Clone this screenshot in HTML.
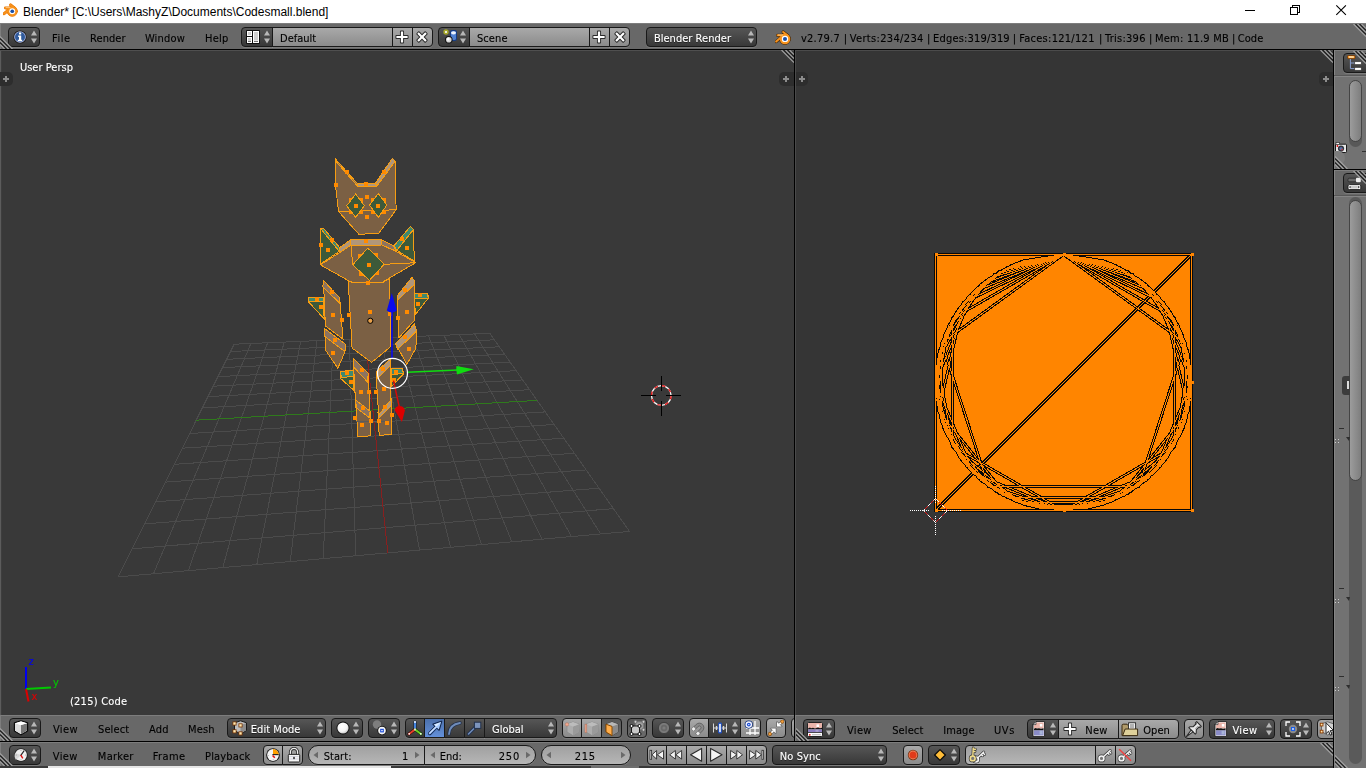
<!DOCTYPE html>
<html><head><meta charset="utf-8"><title>Blender</title><style>
html,body{margin:0;padding:0;background:#393939}
#r{position:relative;width:1366px;height:768px;overflow:hidden;font-family:'DejaVu Sans Condensed','DejaVu Sans','Liberation Sans',sans-serif;font-size:11px}
#r *{box-sizing:border-box}
.a{position:absolute;display:block}
#tx{position:absolute;left:0;top:0;width:1366px;height:768px;will-change:transform}
.w{position:absolute;border:1px solid #191919;box-shadow:0 1px 0 rgba(255,255,255,0.13)}
.t{position:absolute;white-space:pre;line-height:14px;font-size:11px;font-family:'DejaVu Sans Condensed','DejaVu Sans','Liberation Sans',sans-serif;-webkit-text-stroke:0.12px}
.s{text-shadow:0 1px 0 rgba(0,0,0,0.45)}
.title{position:absolute;white-space:pre;font-family:'Liberation Sans',sans-serif;font-size:12px;line-height:16px;color:#000}
</style></head><body><div id="r">
<div style="position:absolute;left:0;top:0;width:1366px;height:23px;background:#fff"></div>
<svg class="a" style="left:3px;top:3.3px" width="14.8" height="14.8" viewBox="0 0 16 16"><g fill="none" stroke-linecap="round"><path d="M8.2 2 L12.6 5.6 M2.6 5.3 H9.4 M1.2 11.6 L5.8 7.6" stroke="#ea7600" stroke-width="3.2"/><circle cx="10" cy="8.9" r="5.5" fill="#ea7600" stroke="#ea7600" stroke-width="1"/><path d="M8.2 2 L12.6 5.6 M2.6 5.3 H9.4 M1.2 11.6 L5.8 7.6" stroke="#f7931e" stroke-width="2"/></g><circle cx="10" cy="8.9" r="5.3" fill="#f7931e"/><path d="M3 5 H8" stroke="#ffd9a0" stroke-width="0.8"/><circle cx="10" cy="8.9" r="3.2" fill="#fff"/><circle cx="10" cy="8.9" r="2" fill="#1a4fa8"/></svg>
<span class="title" style="left:23px;top:4px">Blender* [C:\Users\MashyZ\Documents\Codesmall.blend]</span>
<svg class="a" style="left:1240px;top:0" width="126" height="23"><g stroke="#000" stroke-width="1" fill="none" shape-rendering="crispEdges"><path d="M5 10.5 H15"/><path d="M50.5 7.5 H57.5 V14.5 H50.5Z M52.5 7.5 V5.5 H59.5 V12.5 H57.5"/></g><path d="M96.3 5.3 L105.9 14.9 M105.9 5.3 L96.3 14.9" stroke="#000" stroke-width="1.1" fill="none"/></svg>
<div style="position:absolute;left:0;top:23px;width:1366px;height:26px;background:#686868"></div>
<div style="position:absolute;left:0;top:49px;width:1366px;height:1px;background:#000"></div>
<div style="position:absolute;left:0;top:50px;width:794px;height:665px;background:#393939"></div>
<div style="position:absolute;left:0;top:50px;width:1px;height:665px;background:#5c5c5c"></div>
<div style="position:absolute;left:794px;top:50px;width:1px;height:692px;background:#000"></div>
<div style="position:absolute;left:795px;top:50px;width:538px;height:665px;background:#353535"></div>
<div style="position:absolute;left:795px;top:50px;width:1px;height:665px;background:#4a4a4a"></div>
<div style="position:absolute;left:0;top:50px;width:794px;height:1px;background:#4f4f4f"></div>
<div style="position:absolute;left:795px;top:50px;width:538px;height:1px;background:#4b4b4b"></div>
<div style="position:absolute;left:1px;top:51px;width:1px;height:664px;background:#3e3e3e"></div>
<div style="position:absolute;left:1333px;top:50px;width:1px;height:718px;background:#000"></div>
<div style="position:absolute;left:1334px;top:50px;width:32px;height:718px;background:#727272"></div>
<div style="position:absolute;left:1334px;top:50px;width:32px;height:25px;background:#686868"></div>
<div style="position:absolute;left:1334px;top:170px;width:32px;height:25px;background:#686868"></div>
<div style="position:absolute;left:1334px;top:50px;width:32px;height:1px;background:#7d7d7d"></div>
<div style="position:absolute;left:1334px;top:170px;width:32px;height:1px;background:#7d7d7d"></div>
<div style="position:absolute;left:1334px;top:76px;width:32px;height:1px;background:#858585"></div>
<div style="position:absolute;left:1334px;top:196px;width:32px;height:1px;background:#858585"></div>
<div style="position:absolute;left:0;top:715px;width:794px;height:26px;background:#686868"></div>
<div style="position:absolute;left:795px;top:715px;width:538px;height:26px;background:#686868"></div>
<div style="position:absolute;left:0;top:741px;width:1333px;height:1px;background:#000"></div>
<div style="position:absolute;left:0;top:742px;width:1333px;height:24px;background:#686868"></div>
<div style="position:absolute;left:0;top:766px;width:1333px;height:2px;background:#3a3a3a"></div>
<div style="position:absolute;left:48px;top:766px;width:343px;height:2px;background:#e6e6e6"></div>
<div style="position:absolute;left:591px;top:766px;width:48px;height:2px;background:#6e6e6e"></div>
<div style="position:absolute;left:0px;top:23px;width:1366px;height:1px;background:#7d7d7d"></div>
<div style="position:absolute;left:0px;top:715px;width:794px;height:1px;background:#7d7d7d"></div>
<div style="position:absolute;left:795px;top:715px;width:538px;height:1px;background:#7d7d7d"></div>
<div style="position:absolute;left:0px;top:742px;width:1333px;height:1px;background:#7d7d7d"></div>
<div style="position:absolute;left:0;top:23px;width:1px;height:26px;background:#7d7d7d"></div>
<div style="position:absolute;left:0;top:715px;width:1px;height:26px;background:#7d7d7d"></div>
<div style="position:absolute;left:795px;top:715px;width:1px;height:26px;background:#7d7d7d"></div>
<div style="position:absolute;left:0;top:742px;width:1px;height:24px;background:#7d7d7d"></div>
<div style="position:absolute;left:1334px;top:50px;width:1px;height:718px;background:#858585"></div>
<svg class="a" style="left:0;top:0" width="1366" height="768" viewBox="0 0 1366 768">
<g stroke-width="1" fill="none" shape-rendering="crispEdges"><line x1="234.1" y1="344.2" x2="489.8" y2="333.3" stroke="#4b4b4b"/>
<line x1="230.5" y1="351.5" x2="494.4" y2="339.8" stroke="#4b4b4b"/>
<line x1="226.6" y1="359.3" x2="499.3" y2="346.8" stroke="#4b4b4b"/>
<line x1="222.4" y1="367.6" x2="504.6" y2="354.2" stroke="#4b4b4b"/>
<line x1="218.0" y1="376.6" x2="510.2" y2="362.2" stroke="#4b4b4b"/>
<line x1="213.2" y1="386.2" x2="516.2" y2="370.7" stroke="#4b4b4b"/>
<line x1="208.0" y1="396.6" x2="522.6" y2="379.9" stroke="#4b4b4b"/>
<line x1="202.3" y1="407.9" x2="529.6" y2="389.7" stroke="#4b4b4b"/>
<line x1="189.6" y1="433.5" x2="545.3" y2="411.9" stroke="#4b4b4b"/>
<line x1="182.3" y1="448.2" x2="554.1" y2="424.5" stroke="#4b4b4b"/>
<line x1="174.2" y1="464.3" x2="563.8" y2="438.2" stroke="#4b4b4b"/>
<line x1="165.4" y1="482.1" x2="574.4" y2="453.3" stroke="#4b4b4b"/>
<line x1="155.5" y1="501.8" x2="586.1" y2="469.9" stroke="#4b4b4b"/>
<line x1="144.5" y1="523.9" x2="599.0" y2="488.2" stroke="#4b4b4b"/>
<line x1="132.1" y1="548.8" x2="613.4" y2="508.6" stroke="#4b4b4b"/>
<line x1="118.1" y1="576.9" x2="629.5" y2="531.4" stroke="#4b4b4b"/>
<line x1="234.1" y1="344.2" x2="118.1" y2="576.9" stroke="#4b4b4b"/>
<line x1="250.9" y1="343.5" x2="153.5" y2="573.7" stroke="#4b4b4b"/>
<line x1="267.6" y1="342.8" x2="188.4" y2="570.6" stroke="#4b4b4b"/>
<line x1="284.2" y1="342.1" x2="222.8" y2="567.6" stroke="#4b4b4b"/>
<line x1="300.7" y1="341.4" x2="256.8" y2="564.6" stroke="#4b4b4b"/>
<line x1="317.0" y1="340.7" x2="290.2" y2="561.6" stroke="#4b4b4b"/>
<line x1="333.3" y1="340.0" x2="323.2" y2="558.7" stroke="#4b4b4b"/>
<line x1="349.4" y1="339.3" x2="355.7" y2="555.8" stroke="#4b4b4b"/>
<line x1="381.4" y1="337.9" x2="419.5" y2="550.1" stroke="#4b4b4b"/>
<line x1="397.2" y1="337.2" x2="450.7" y2="547.3" stroke="#4b4b4b"/>
<line x1="412.9" y1="336.6" x2="481.5" y2="544.6" stroke="#4b4b4b"/>
<line x1="428.5" y1="335.9" x2="511.9" y2="541.9" stroke="#4b4b4b"/>
<line x1="444.0" y1="335.3" x2="541.9" y2="539.2" stroke="#4b4b4b"/>
<line x1="459.3" y1="334.6" x2="571.5" y2="536.6" stroke="#4b4b4b"/>
<line x1="474.6" y1="333.9" x2="600.7" y2="534.0" stroke="#4b4b4b"/>
<line x1="489.8" y1="333.3" x2="629.5" y2="531.4" stroke="#4b4b4b"/>
<line x1="196.2" y1="420.2" x2="537.1" y2="400.4" stroke="#2f7a1c"/>
<line x1="365.4" y1="338.6" x2="387.8" y2="552.9" stroke="#8a1f1f"/></g>
<g shape-rendering="crispEdges"><polygon points="308.5,298.0 323.4,297.3 324.1,318.8 308.5,301.9" fill="#3d5a3a" stroke="#f79d12" stroke-width="1"/>
<polygon points="308.5,298.0 323.4,297.3 323.4,301.9 309.0,301.9" fill="#3f8a70" stroke="#f79d12" stroke-width="1"/>
<polygon points="414.6,293.4 427.0,293.4 428.9,297.3 415.2,314.9" fill="#3d5a3a" stroke="#f79d12" stroke-width="1"/>
<polygon points="414.6,293.4 427.0,293.4 428.3,298.0 414.6,298.0" fill="#3f8a70" stroke="#f79d12" stroke-width="1"/>
<polygon points="340.2,371.5 353.2,370.2 353.9,390.4 340.8,378.6" fill="#3d5a3a" stroke="#f79d12" stroke-width="1"/>
<polygon points="340.2,371.5 353.2,370.2 353.2,376.0 341.5,378.0" fill="#3f8a70" stroke="#f79d12" stroke-width="1"/>
<polygon points="391.0,368.2 402.7,368.2 403.3,374.1 391.6,386.5" fill="#3d5a3a" stroke="#f79d12" stroke-width="1"/>
<polygon points="391.0,368.2 402.7,368.2 403.1,373.4 391.6,374.7" fill="#3f8a70" stroke="#f79d12" stroke-width="1"/>
<polygon points="353.2,358.5 368.2,373.4 370.1,417.7 355.8,407.3" fill="#7b6044" stroke="#f79d12" stroke-width="1"/>
<polygon points="353.2,358.5 368.2,373.4 367.5,381.9 353.6,367.0" fill="#8c7360" stroke="#f79d12" stroke-width="1"/>
<polygon points="355.8,400.1 370.1,411.2 370.1,435.9 357.8,436.6" fill="#7b6044" stroke="#f79d12" stroke-width="1"/>
<polygon points="355.8,400.1 370.1,411.2 369.5,417.7 356.2,407.9" fill="#8c7360" stroke="#f79d12" stroke-width="1"/>
<polygon points="391.0,400.1 391.6,434.6 379.2,435.3 378.0,415.1" fill="#7b6044" stroke="#f79d12" stroke-width="1"/>
<polygon points="391.0,398.8 391.0,406.0 379.2,417.7 378.0,412.5" fill="#b0967a" stroke="#f79d12" stroke-width="1"/>
<polygon points="390.3,359.1 391.0,399.5 378.6,415.1 376.0,372.1" fill="#7b6044" stroke="#f79d12" stroke-width="1"/>
<polygon points="390.3,359.1 390.3,365.6 377.9,378.0 376.6,372.1" fill="#b0967a" stroke="#f79d12" stroke-width="1"/>
<line x1="355.8" y1="421.8" x2="387.7" y2="421.4" stroke="#5a5a5a"/>
<polygon points="348.2,281.1 353.4,283.0 382.7,282.4 389.8,278.5 390.5,346.8 371.6,362.4 352.1,348.1" fill="#7b6044" stroke="#f79d12" stroke-width="1"/>
<polygon points="323.4,280.4 339.7,298.0 343.0,339.0 325.4,326.0" fill="#7b6044" stroke="#f79d12" stroke-width="1"/>
<polygon points="323.4,280.4 339.7,298.0 339.7,303.2 322.8,286.9" fill="#8c7360" stroke="#f79d12" stroke-width="1"/>
<polygon points="324.7,328.6 345.6,344.2 344.9,352.0 337.8,368.3 326.0,350.7" fill="#7b6044" stroke="#f79d12" stroke-width="1"/>
<polygon points="324.7,328.6 345.6,344.2 344.9,351.4 324.7,336.4" fill="#8c7360" stroke="#f79d12" stroke-width="1"/>
<polygon points="412.0,277.2 414.6,281.1 414.6,320.1 399.0,337.7 397.0,297.3" fill="#7b6044" stroke="#f79d12" stroke-width="1"/>
<polygon points="412.0,277.2 414.6,281.1 414.6,284.3 397.7,300.0 397.0,296.0" fill="#b0967a" stroke="#f79d12" stroke-width="1"/>
<polygon points="414.6,324.0 416.5,331.2 415.9,348.1 406.8,364.4 395.7,343.6" fill="#7b6044" stroke="#f79d12" stroke-width="1"/>
<polygon points="414.6,324.0 416.5,331.2 397.7,349.4 395.7,343.6" fill="#b0967a" stroke="#f79d12" stroke-width="1"/>
<polygon points="320.9,228.9 320.9,263.8 339.2,251.3" fill="#3d5a3a" stroke="#f79d12" stroke-width="1"/>
<polygon points="320.9,228.9 323.5,228.3 339.7,247.6 339.2,251.3" fill="#3f8a70" stroke="#f79d12" stroke-width="1"/>
<polygon points="410.5,226.3 413.6,229.4 414.2,261.1 396.5,250.2" fill="#3d5a3a" stroke="#f79d12" stroke-width="1"/>
<polygon points="410.5,226.3 413.6,229.4 397.0,250.2 393.9,246.0" fill="#3f8a70" stroke="#f79d12" stroke-width="1"/>
<polygon points="320.4,264.8 340.2,252.3 350.1,245.5 381.9,245.0 395.9,251.3 415.7,262.7 389.7,277.8 382.9,282.0 352.7,282.5 348.0,280.4" fill="#7b6044" stroke="#f79d12" stroke-width="1"/>
<polygon points="350.1,239.3 381.9,239.3 381.9,245.0 350.1,245.5" fill="#b0967a" stroke="#f79d12" stroke-width="1"/>
<polygon points="339.7,247.6 350.1,240.3 350.1,245.5 340.2,252.3" fill="#b0967a" stroke="#f79d12" stroke-width="1"/>
<polygon points="381.9,239.8 393.3,245.5 396.5,251.3 381.9,245.0" fill="#8c7360" stroke="#f79d12" stroke-width="1"/>
<polyline points="351.1,245.5 352.7,264.8" fill="none" stroke="#f79d12"/>
<polyline points="384.2,264.3 415.7,262.7" fill="none" stroke="#f79d12"/>
<rect x="358.0" y="254.0" width="4" height="4" fill="#ff8a00"/><rect x="374.3" y="252.8" width="4" height="4" fill="#ff8a00"/><rect x="358.5" y="271.5" width="4" height="4" fill="#ff8a00"/><rect x="375.3" y="270.5" width="4" height="4" fill="#ff8a00"/>
<polygon points="367.8,248.1 384.2,264.3 369.4,280.4 352.7,264.8" fill="#3d5a3a" stroke="#f79d12" stroke-width="1"/>
<polygon points="335.3,158.8 357.2,183.4 375.4,183.4 392.4,158.2 395.3,161.1 396.1,209.8 378.9,233.2 359.0,234.4 338.5,211.5 335.5,185.2" fill="#7b6044" stroke="#f79d12" stroke-width="1"/>
<polygon points="357.2,183.4 375.4,183.4 376.6,186.3 357.2,186.3" fill="#b0967a" stroke="#f79d12" stroke-width="1"/>
<polygon points="392.4,158.2 395.3,161.1 377.2,185.7 375.4,183.4" fill="#b0967a" stroke="#f79d12" stroke-width="1"/>
<polygon points="335.3,158.8 357.2,183.4 356.5,185.0 336.0,161.5" fill="#8c7360" stroke="#f79d12" stroke-width="1"/>
<polyline points="338.5,211.5 396.1,209.8" fill="none" stroke="#f79d12"/>
<rect x="348.5" y="198.0" width="4" height="4" fill="#ff8a00"/><rect x="359.0" y="198.0" width="4" height="4" fill="#ff8a00"/><rect x="348.5" y="209.5" width="4" height="4" fill="#ff8a00"/><rect x="359.0" y="209.5" width="4" height="4" fill="#ff8a00"/><rect x="371.0" y="197.5" width="4" height="4" fill="#ff8a00"/><rect x="381.8" y="197.5" width="4" height="4" fill="#ff8a00"/><rect x="371.0" y="209.5" width="4" height="4" fill="#ff8a00"/><rect x="381.8" y="209.5" width="4" height="4" fill="#ff8a00"/>
<polygon points="355.7,194.0 364.3,205.7 355.7,217.4 346.7,205.7" fill="#3d5a3a" stroke="#f79d12" stroke-width="1"/>
<polygon points="378.3,193.4 386.8,205.1 378.3,217.4 369.5,205.1" fill="#3d5a3a" stroke="#f79d12" stroke-width="1"/>
<rect x="364.6" y="194.9" width="4" height="4" fill="#ff8a00"/>
<rect x="364.6" y="214.8" width="4" height="4" fill="#ff8a00"/>
<rect x="353.7" y="203.9" width="4" height="4" fill="#ff8a00"/>
<rect x="376.0" y="203.9" width="4" height="4" fill="#ff8a00"/>
<rect x="364.0" y="181.9" width="4" height="4" fill="#ff8a00"/>
<rect x="345.0" y="170.0" width="4" height="4" fill="#ff8a00"/>
<rect x="381.5" y="169.5" width="4" height="4" fill="#ff8a00"/>
<rect x="334.0" y="182.5" width="4" height="4" fill="#ff8a00"/>
<rect x="368.3" y="310.0" width="4" height="4" fill="#ff8a00"/>
<rect x="330.8" y="313.0" width="4" height="4" fill="#ff8a00"/>
<rect x="404.8" y="310.0" width="4" height="4" fill="#ff8a00"/>
<rect x="318.8" y="305.1" width="4" height="4" fill="#ff8a00"/>
<rect x="415.8" y="301.9" width="4" height="4" fill="#ff8a00"/>
<rect x="406.7" y="346.8" width="4" height="4" fill="#ff8a00"/>
<rect x="330.8" y="350.7" width="4" height="4" fill="#ff8a00"/>
<rect x="346.8" y="313.0" width="4" height="4" fill="#ff8a00"/>
<rect x="339.7" y="317.5" width="4" height="4" fill="#ff8a00"/>
<rect x="395.9" y="315.5" width="4" height="4" fill="#ff8a00"/>
<rect x="329.9" y="289.5" width="4" height="4" fill="#ff8a00"/>
<rect x="403.2" y="287.5" width="4" height="4" fill="#ff8a00"/>
<rect x="403.2" y="334.7" width="4" height="4" fill="#ff8a00"/>
<rect x="332.9" y="337.7" width="4" height="4" fill="#ff8a00"/>
<rect x="314.9" y="296.6" width="4" height="4" fill="#ff8a00"/>
<rect x="417.8" y="293.4" width="4" height="4" fill="#ff8a00"/>
<rect x="365.7" y="281.0" width="4" height="4" fill="#ff8a00"/>
<rect x="387.8" y="312.3" width="4" height="4" fill="#ff8a00"/>
<rect x="326.0" y="248.0" width="4" height="4" fill="#ff8a00"/>
<rect x="329.7" y="237.5" width="4" height="4" fill="#ff8a00"/>
<rect x="405.0" y="246.0" width="4" height="4" fill="#ff8a00"/>
<rect x="400.3" y="236.5" width="4" height="4" fill="#ff8a00"/>
<rect x="364.0" y="239.3" width="4" height="4" fill="#ff8a00"/>
<rect x="367.0" y="262.8" width="4" height="4" fill="#ff8a00"/>
<rect x="319.0" y="243.0" width="4" height="4" fill="#ff8a00"/>
<rect x="359.0" y="390.0" width="4" height="4" fill="#ff8a00"/>
<rect x="382.0" y="387.0" width="4" height="4" fill="#ff8a00"/>
<rect x="349.0" y="379.5" width="4" height="4" fill="#ff8a00"/>
<rect x="392.0" y="377.5" width="4" height="4" fill="#ff8a00"/>
<rect x="345.0" y="371.3" width="4" height="4" fill="#ff8a00"/>
<rect x="394.0" y="369.5" width="4" height="4" fill="#ff8a00"/>
<rect x="359.5" y="368.0" width="4" height="4" fill="#ff8a00"/>
<rect x="380.5" y="366.5" width="4" height="4" fill="#ff8a00"/>
<rect x="361.0" y="406.0" width="4" height="4" fill="#ff8a00"/>
<rect x="383.0" y="404.5" width="4" height="4" fill="#ff8a00"/>
<rect x="360.0" y="422.5" width="4" height="4" fill="#ff8a00"/>
<rect x="384.5" y="420.5" width="4" height="4" fill="#ff8a00"/>
<rect x="353.0" y="416.0" width="4" height="4" fill="#ff8a00"/>
<rect x="374.0" y="390.0" width="4" height="4" fill="#ff8a00"/>
<rect x="367.0" y="390.0" width="4" height="4" fill="#ff8a00"/>
<rect x="390.0" y="413.0" width="4" height="4" fill="#ff8a00"/>
<rect x="376.5" y="419.0" width="4" height="4" fill="#ff8a00"/>
<rect x="368.5" y="419.0" width="4" height="4" fill="#ff8a00"/></g>
<circle cx="370.3" cy="320.8" r="2.6" fill="#e8a04a" stroke="#000" stroke-width="1"/>
<line x1="392" y1="312" x2="392" y2="359" stroke="#0a0aee" stroke-width="1.6"/>
<path d="M391.8 293 L396.8 310.5 Q392 314.5 386.8 310.5Z" fill="#0a0aee"/>
<line x1="407.3" y1="372.2" x2="458" y2="370" stroke="#10dc10" stroke-width="1.4"/>
<path d="M473.8 369.3 L457 374.6 Q455.8 370 456.4 366Z" fill="#10dc10"/>
<line x1="393.5" y1="380.7" x2="399.5" y2="408" stroke="#dc0808" stroke-width="1.4"/>
<path d="M394.6 410 Q395 406.5 399 406 Q404 406 404.9 410.4 L401.9 422Z" fill="#dc0000"/>
<circle cx="392.5" cy="373.3" r="15" fill="none" stroke="#fff" stroke-width="1.2"/>
<g fill="none"><circle cx="661.3" cy="395.5" r="9.8" stroke="#fff" stroke-width="1.3"/><circle cx="661.3" cy="395.5" r="9.8" stroke="#e61010" stroke-width="1.3" stroke-dasharray="3.85 3.85"/><path d="M641 395.5 H656 M666 395.5 H681 M661.5 376 V390.5 M661.5 401 V416" stroke="#000" shape-rendering="crispEdges"/></g>
<g fill="none" stroke-width="2"><path d="M26 689 V667" stroke="#0000f0"/><path d="M26 689 L51 687.5" stroke="#00c800"/><path d="M26 689 L28.5 701.5" stroke="#dc0000"/></g>
<rect x="934.0" y="253.0" width="259.0" height="259.0" fill="#ff8500"/>
<g shape-rendering="crispEdges" fill="none"><path d="M1063.5 254.5 L941.8 342.9 L988.3 486.1 L1138.7 486.1 L1185.2 342.9Z M1063.5 254.5 L952.6 318.5 L952.6 446.5 L1063.5 510.5 L1174.4 446.5 L1174.4 318.5Z M1063.5 254.5 L963.4 302.7 L938.7 411.0 L1008.0 497.8 L1119.0 497.8 L1188.3 411.0 L1163.6 302.7Z M1063.5 254.5 L973.0 292.0 L935.5 382.5 L973.0 473.0 L1063.5 510.5 L1154.0 473.0 L1191.5 382.5 L1154.0 292.0Z M1063.5 254.5 L981.2 284.4 L937.4 360.3 L952.6 446.5 L1019.7 502.8 L1107.3 502.8 L1174.4 446.5 L1189.6 360.3 L1145.8 284.4Z M1063.5 254.5 L988.3 278.9 L941.8 342.9 L941.8 422.1 L988.3 486.1 L1063.5 510.5 L1138.7 486.1 L1185.2 422.1 L1185.2 342.9 L1138.7 278.9Z M1063.5 254.5 L994.3 274.8 L947.1 329.3 L936.8 400.7 L966.8 466.3 L1027.4 505.3 L1099.6 505.3 L1160.2 466.3 L1190.2 400.7 L1179.9 329.3 L1132.7 274.8Z M1063.5 254.5 L999.5 271.6 L952.6 318.5 L935.5 382.5 L952.6 446.5 L999.5 493.4 L1063.5 510.5 L1127.5 493.4 L1174.4 446.5 L1191.5 382.5 L1174.4 318.5 L1127.5 271.6Z M1063.5 254.5 L1004.0 269.2 L958.2 309.8 L936.4 367.1 L943.8 427.9 L978.6 478.3 L1032.9 506.8 L1094.1 506.8 L1148.4 478.3 L1183.2 427.9 L1190.6 367.1 L1168.8 309.8 L1123.0 269.2Z M1063.5 254.5 L1008.0 267.2 L963.4 302.7 L938.7 354.0 L938.7 411.0 L963.4 462.3 L1008.0 497.8 L1063.5 510.5 L1119.0 497.8 L1163.6 462.3 L1188.3 411.0 L1188.3 354.0 L1163.6 302.7 L1119.0 267.2Z M1063.5 254.5 L1011.4 265.6 L968.4 296.9 L941.8 342.9 L936.2 395.9 L952.6 446.5 L988.3 486.1 L1036.9 507.7 L1090.1 507.7 L1138.7 486.1 L1174.4 446.5 L1190.8 395.9 L1185.2 342.9 L1158.6 296.9 L1115.6 265.6Z M1063.5 254.5 L1014.5 264.2 L973.0 292.0 L945.2 333.5 L935.5 382.5 L945.2 431.5 L973.0 473.0 L1014.5 500.8 L1063.5 510.5 L1112.5 500.8 L1154.0 473.0 L1181.8 431.5 L1191.5 382.5 L1181.8 333.5 L1154.0 292.0 L1112.5 264.2Z M1063.5 254.5 L1017.3 263.1 L977.3 287.9 L948.9 325.4 L936.0 370.7 L940.4 417.5 L961.4 459.6 L996.1 491.3 L1040.0 508.3 L1087.0 508.3 L1130.9 491.3 L1165.6 459.6 L1186.6 417.5 L1191.0 370.7 L1178.1 325.4 L1149.7 287.9 L1109.7 263.1Z M1063.5 254.5 L1019.7 262.2 L981.2 284.4 L952.6 318.5 L937.4 360.3 L937.4 404.7 L952.6 446.5 L981.2 480.6 L1019.7 502.8 L1063.5 510.5 L1107.3 502.8 L1145.8 480.6 L1174.4 446.5 L1189.6 404.7 L1189.6 360.3 L1174.4 318.5 L1145.8 284.4 L1107.3 262.2Z M1063.5 254.5 L1021.9 261.4 L984.9 281.5 L956.3 312.5 L939.4 351.1 L935.9 393.1 L946.3 433.9 L969.3 469.2 L1002.6 495.1 L1042.4 508.8 L1084.6 508.8 L1124.4 495.1 L1157.7 469.2 L1180.7 433.9 L1191.1 393.1 L1187.6 351.1 L1170.7 312.5 L1142.1 281.5 L1105.1 261.4Z M1063.5 254.5 L1023.9 260.8 L988.3 278.9 L959.9 307.3 L941.8 342.9 L935.5 382.5 L941.8 422.1 L959.9 457.7 L988.3 486.1 L1023.9 504.2 L1063.5 510.5 L1103.1 504.2 L1138.7 486.1 L1167.1 457.7 L1185.2 422.1 L1191.5 382.5 L1185.2 342.9 L1167.1 307.3 L1138.7 278.9 L1103.1 260.8Z M935.5 510.5 L1191.5 254.5 M935.5 254.5 H1191.5 V510.5 H935.5Z" stroke="#080808" stroke-width="3"/><path d="M1063.5 254.5 L941.8 342.9 L988.3 486.1 L1138.7 486.1 L1185.2 342.9Z M1063.5 254.5 L952.6 318.5 L952.6 446.5 L1063.5 510.5 L1174.4 446.5 L1174.4 318.5Z M1063.5 254.5 L963.4 302.7 L938.7 411.0 L1008.0 497.8 L1119.0 497.8 L1188.3 411.0 L1163.6 302.7Z M1063.5 254.5 L973.0 292.0 L935.5 382.5 L973.0 473.0 L1063.5 510.5 L1154.0 473.0 L1191.5 382.5 L1154.0 292.0Z M1063.5 254.5 L981.2 284.4 L937.4 360.3 L952.6 446.5 L1019.7 502.8 L1107.3 502.8 L1174.4 446.5 L1189.6 360.3 L1145.8 284.4Z M1063.5 254.5 L988.3 278.9 L941.8 342.9 L941.8 422.1 L988.3 486.1 L1063.5 510.5 L1138.7 486.1 L1185.2 422.1 L1185.2 342.9 L1138.7 278.9Z M1063.5 254.5 L994.3 274.8 L947.1 329.3 L936.8 400.7 L966.8 466.3 L1027.4 505.3 L1099.6 505.3 L1160.2 466.3 L1190.2 400.7 L1179.9 329.3 L1132.7 274.8Z M1063.5 254.5 L999.5 271.6 L952.6 318.5 L935.5 382.5 L952.6 446.5 L999.5 493.4 L1063.5 510.5 L1127.5 493.4 L1174.4 446.5 L1191.5 382.5 L1174.4 318.5 L1127.5 271.6Z M1063.5 254.5 L1004.0 269.2 L958.2 309.8 L936.4 367.1 L943.8 427.9 L978.6 478.3 L1032.9 506.8 L1094.1 506.8 L1148.4 478.3 L1183.2 427.9 L1190.6 367.1 L1168.8 309.8 L1123.0 269.2Z M1063.5 254.5 L1008.0 267.2 L963.4 302.7 L938.7 354.0 L938.7 411.0 L963.4 462.3 L1008.0 497.8 L1063.5 510.5 L1119.0 497.8 L1163.6 462.3 L1188.3 411.0 L1188.3 354.0 L1163.6 302.7 L1119.0 267.2Z M1063.5 254.5 L1011.4 265.6 L968.4 296.9 L941.8 342.9 L936.2 395.9 L952.6 446.5 L988.3 486.1 L1036.9 507.7 L1090.1 507.7 L1138.7 486.1 L1174.4 446.5 L1190.8 395.9 L1185.2 342.9 L1158.6 296.9 L1115.6 265.6Z M1063.5 254.5 L1014.5 264.2 L973.0 292.0 L945.2 333.5 L935.5 382.5 L945.2 431.5 L973.0 473.0 L1014.5 500.8 L1063.5 510.5 L1112.5 500.8 L1154.0 473.0 L1181.8 431.5 L1191.5 382.5 L1181.8 333.5 L1154.0 292.0 L1112.5 264.2Z M1063.5 254.5 L1017.3 263.1 L977.3 287.9 L948.9 325.4 L936.0 370.7 L940.4 417.5 L961.4 459.6 L996.1 491.3 L1040.0 508.3 L1087.0 508.3 L1130.9 491.3 L1165.6 459.6 L1186.6 417.5 L1191.0 370.7 L1178.1 325.4 L1149.7 287.9 L1109.7 263.1Z M1063.5 254.5 L1019.7 262.2 L981.2 284.4 L952.6 318.5 L937.4 360.3 L937.4 404.7 L952.6 446.5 L981.2 480.6 L1019.7 502.8 L1063.5 510.5 L1107.3 502.8 L1145.8 480.6 L1174.4 446.5 L1189.6 404.7 L1189.6 360.3 L1174.4 318.5 L1145.8 284.4 L1107.3 262.2Z M1063.5 254.5 L1021.9 261.4 L984.9 281.5 L956.3 312.5 L939.4 351.1 L935.9 393.1 L946.3 433.9 L969.3 469.2 L1002.6 495.1 L1042.4 508.8 L1084.6 508.8 L1124.4 495.1 L1157.7 469.2 L1180.7 433.9 L1191.1 393.1 L1187.6 351.1 L1170.7 312.5 L1142.1 281.5 L1105.1 261.4Z M1063.5 254.5 L1023.9 260.8 L988.3 278.9 L959.9 307.3 L941.8 342.9 L935.5 382.5 L941.8 422.1 L959.9 457.7 L988.3 486.1 L1023.9 504.2 L1063.5 510.5 L1103.1 504.2 L1138.7 486.1 L1167.1 457.7 L1185.2 422.1 L1191.5 382.5 L1185.2 342.9 L1167.1 307.3 L1138.7 278.9 L1103.1 260.8Z M935.5 510.5 L1191.5 254.5 M935.5 254.5 H1191.5 V510.5 H935.5Z" stroke="#ff8500" stroke-width="1"/></g>
<rect x="935.0" y="253.0" width="3" height="3" fill="#ff8500"/>
<rect x="1191.0" y="253.0" width="3" height="3" fill="#ff8500"/>
<rect x="1191.0" y="509.0" width="3" height="3" fill="#ff8500"/>
<rect x="935.0" y="509.0" width="3" height="3" fill="#ff8500"/>
<rect x="1063.0" y="253.0" width="3" height="3" fill="#ff8500"/>
<rect x="1063.0" y="509.0" width="3" height="3" fill="#ff8500"/>
<rect x="1191.0" y="381.0" width="3" height="3" fill="#ff8500"/>
<g fill="none" shape-rendering="crispEdges"><path d="M935.5 498.5 L947.5 510.5 L935.5 522.5 L923.5 510.5Z" stroke="#fff" stroke-width="1" shape-rendering="auto"/><path d="M935.5 498.5 L947.5 510.5 L935.5 522.5 L923.5 510.5Z" stroke="#e01010" stroke-width="1" stroke-dasharray="4 4" stroke-dashoffset="-5" shape-rendering="auto"/><path d="M910 510.5 H930 M942 510.5 H961 M935.5 486 V504 M935.5 516 V536" stroke="#fff" stroke-dasharray="1 1"/></g>
</svg>
<div class="w" style="left:8px;top:27px;width:32px;height:20px;background:linear-gradient(#565656,#383838);border-radius:4px;"></div>
<svg class="a" style="left:12px;top:29px" width="16" height="16" viewBox="0 0 16 16"><circle cx="8" cy="8" r="6.6" fill="#1a1a1a"/><circle cx="8" cy="8" r="5.8" fill="#b4bce4"/><circle cx="8" cy="8" r="5" fill="#2f5a9c"/><path d="M7 3.6 h2.2 v2 h-2.2z M6.2 6.6 h3 v4.2 h1 v1.4 h-4.4 v-1.4 h1.2 v-2.8 h-0.8z" fill="#fff"/></svg>
<svg class="a" style="left:29.5px;top:29px" width="8" height="16" viewBox="0 0 8 16"><path d="M4 1.5 L7 6.5 H1Z M4 14.5 L7 9.5 H1Z" fill="#b8b8b8"/></svg>
<div class="w" style="left:241px;top:27px;width:32px;height:20px;background:linear-gradient(#565656,#383838);border-radius:4px 0 0 4px;"></div>
<svg class="a" style="left:245px;top:29px" width="16" height="16" viewBox="0 0 16 16"><rect x="1" y="1" width="14" height="14" rx="1" fill="#111"/><rect x="2" y="2" width="5" height="5" fill="#fff"/><rect x="3" y="3" width="3" height="3" fill="#d0d0d0"/><rect x="2" y="8" width="5" height="6" fill="#fff"/><rect x="3" y="9" width="3" height="3" fill="#d0d0d0"/><rect x="3" y="12" width="3" height="0.8" fill="#555"/><rect x="8" y="2" width="6" height="12" fill="#fff"/><rect x="9" y="3" width="4" height="8.5" fill="#cfcfcf"/><rect x="9" y="12" width="4" height="0.8" fill="#555"/></svg>
<svg class="a" style="left:262.5px;top:29px" width="8" height="16" viewBox="0 0 8 16"><path d="M4 1.5 L7 6.5 H1Z M4 14.5 L7 9.5 H1Z" fill="#b8b8b8"/></svg>
<div class="w" style="left:272px;top:27px;width:121px;height:20px;background:linear-gradient(#a9a9a9,#8b8b8b);border-radius:0;"></div>
<div class="w" style="left:392px;top:27px;width:21px;height:20px;background:linear-gradient(#a9a9a9,#8b8b8b);border-radius:0;"></div>
<div class="w" style="left:412px;top:27px;width:21px;height:20px;background:linear-gradient(#a9a9a9,#8b8b8b);border-radius:0 4px 4px 0;"></div>
<svg class="a" style="left:394px;top:29px" width="16" height="16" viewBox="0 0 16 16"><path d="M6.9 2.4 h2.2 v4.5 h4.5 v2.2 h-4.5 v4.5 h-2.2 v-4.5 h-4.5 v-2.2 h4.5z" fill="#fff" stroke="#2a2a2a" stroke-width="1.9" stroke-linejoin="round" paint-order="stroke"/></svg>
<svg class="a" style="left:414px;top:29px" width="16" height="16" viewBox="0 0 16 16"><path d="M6.9 2.4 h2.2 v4.5 h4.5 v2.2 h-4.5 v4.5 h-2.2 v-4.5 h-4.5 v-2.2 h4.5z" transform="rotate(45 8 8)" fill="#fff" stroke="#2a2a2a" stroke-width="1.9" stroke-linejoin="round" paint-order="stroke"/></svg>
<div class="w" style="left:438px;top:27px;width:32px;height:20px;background:linear-gradient(#565656,#383838);border-radius:4px 0 0 4px;"></div>
<svg class="a" style="left:442px;top:28px" width="16" height="16" viewBox="0 0 16 16"><circle cx="4" cy="4" r="2.7" fill="#a8a82a"/><circle cx="4" cy="4" r="1.1" fill="#fff"/><rect x="8" y="2" width="7" height="11" rx="2.2" fill="#153d86"/><rect x="9" y="3" width="5" height="9" rx="1.6" fill="#4f80d0"/><ellipse cx="11.5" cy="4.8" rx="2.5" ry="1.6" fill="#f0f6ff"/><circle cx="6.8" cy="11.8" r="3.8" fill="#111"/><circle cx="6.8" cy="11.8" r="2.8" fill="#d8d8d8"/><circle cx="6.2" cy="11.1" r="1.5" fill="#fff"/></svg>
<svg class="a" style="left:459.4px;top:29px" width="8" height="16" viewBox="0 0 8 16"><path d="M4 1.5 L7 6.5 H1Z M4 14.5 L7 9.5 H1Z" fill="#b8b8b8"/></svg>
<div class="w" style="left:469px;top:27px;width:121px;height:20px;background:linear-gradient(#a9a9a9,#8b8b8b);border-radius:0;"></div>
<div class="w" style="left:589px;top:27px;width:21px;height:20px;background:linear-gradient(#a9a9a9,#8b8b8b);border-radius:0;"></div>
<div class="w" style="left:609px;top:27px;width:21px;height:20px;background:linear-gradient(#a9a9a9,#8b8b8b);border-radius:0 4px 4px 0;"></div>
<svg class="a" style="left:591px;top:29px" width="16" height="16" viewBox="0 0 16 16"><path d="M6.9 2.4 h2.2 v4.5 h4.5 v2.2 h-4.5 v4.5 h-2.2 v-4.5 h-4.5 v-2.2 h4.5z" fill="#fff" stroke="#2a2a2a" stroke-width="1.9" stroke-linejoin="round" paint-order="stroke"/></svg>
<svg class="a" style="left:611.5px;top:29px" width="16" height="16" viewBox="0 0 16 16"><path d="M6.9 2.4 h2.2 v4.5 h4.5 v2.2 h-4.5 v4.5 h-2.2 v-4.5 h-4.5 v-2.2 h4.5z" transform="rotate(45 8 8)" fill="#fff" stroke="#2a2a2a" stroke-width="1.9" stroke-linejoin="round" paint-order="stroke"/></svg>
<div class="w" style="left:646px;top:27px;width:111px;height:20px;background:linear-gradient(#565656,#383838);border-radius:4px;"></div>
<svg class="a" style="left:746.8px;top:29px" width="8" height="16" viewBox="0 0 8 16"><path d="M4 1.5 L7 6.5 H1Z M4 14.5 L7 9.5 H1Z" fill="#b8b8b8"/></svg>
<svg class="a" style="left:775px;top:29.7px" width="16" height="16" viewBox="0 0 16 16"><g fill="none" stroke-linecap="round"><path d="M8.2 2 L12.6 5.6 M2.6 5.3 H9.4 M1.2 11.6 L5.8 7.6" stroke="#4a2a08" stroke-width="3.2"/><circle cx="10" cy="8.9" r="5.5" fill="#4a2a08" stroke="#4a2a08" stroke-width="1"/><path d="M8.2 2 L12.6 5.6 M2.6 5.3 H9.4 M1.2 11.6 L5.8 7.6" stroke="#f7931e" stroke-width="2"/></g><circle cx="10" cy="8.9" r="5.3" fill="#f7931e"/><path d="M3 5 H8" stroke="#ffd9a0" stroke-width="0.8"/><circle cx="10" cy="8.9" r="3.2" fill="#fff"/><circle cx="10" cy="8.9" r="2" fill="#1a4fa8"/></svg>
<svg class="a" style="left:0px;top:36px" width="13" height="13" viewBox="0 0 13 13"><path d="M0 2.5 L10.5 13 M0 6.5 L6.5 13" stroke="#222" stroke-width="1.3" fill="none"/><path d="M0 0.5 L12.5 13 M0 4.5 L8.5 13 M0 8.5 L4.5 13" stroke="#a0a0a0" stroke-width="1.2" fill="none"/></svg>
<svg class="a" style="left:1353px;top:24px" width="13" height="13" viewBox="0 0 13 13"><path d="M2.5 0 L13 10.5 M6.5 0 L13 6.5" stroke="#222" stroke-width="1.3" fill="none"/><path d="M0.5 0 L13 12.5 M4.5 0 L13 8.5 M8.5 0 L13 4.5" stroke="#a0a0a0" stroke-width="1.2" fill="none"/></svg>
<div class="a" style="left:0px;top:72px;width:13px;height:14px;background:#2d2d2d;border-radius:0 5px 5px 0"><svg class="a" style="left:3.0px;top:4px" width="6" height="6"><path d="M2 0 h2 v2 h2 v2 h-2 v2 h-2 v-2 h-2 v-2 h2z" fill="#8c8c8c"/></svg></div>
<div class="a" style="left:779px;top:72px;width:15px;height:14px;background:#2d2d2d;border-radius:5px 0 0 5px"><svg class="a" style="left:4.0px;top:4px" width="6" height="6"><path d="M2 0 h2 v2 h2 v2 h-2 v2 h-2 v-2 h-2 v-2 h2z" fill="#8c8c8c"/></svg></div>
<div class="a" style="left:796px;top:72px;width:12px;height:14px;background:#2d2d2d;border-radius:0 5px 5px 0"><svg class="a" style="left:2.5px;top:4px" width="6" height="6"><path d="M2 0 h2 v2 h2 v2 h-2 v2 h-2 v-2 h-2 v-2 h2z" fill="#8c8c8c"/></svg></div>
<div class="a" style="left:1319px;top:72px;width:14px;height:14px;background:#2d2d2d;border-radius:5px 0 0 5px"><svg class="a" style="left:3.5px;top:4px" width="6" height="6"><path d="M2 0 h2 v2 h2 v2 h-2 v2 h-2 v-2 h-2 v-2 h2z" fill="#8c8c8c"/></svg></div>
<svg class="a" style="left:781px;top:50px" width="13" height="13" viewBox="0 0 13 13"><path d="M2.5 0 L13 10.5 M6.5 0 L13 6.5" stroke="#222" stroke-width="1.3" fill="none"/><path d="M0.5 0 L13 12.5 M4.5 0 L13 8.5 M8.5 0 L13 4.5" stroke="#a0a0a0" stroke-width="1.2" fill="none"/></svg>
<svg class="a" style="left:1320px;top:50px" width="13" height="13" viewBox="0 0 13 13"><path d="M2.5 0 L13 10.5 M6.5 0 L13 6.5" stroke="#222" stroke-width="1.3" fill="none"/><path d="M0.5 0 L13 12.5 M4.5 0 L13 8.5 M8.5 0 L13 4.5" stroke="#a0a0a0" stroke-width="1.2" fill="none"/></svg>
<div class="w" style="left:9px;top:718px;width:32px;height:20px;background:linear-gradient(#565656,#383838);border-radius:4px;"></div>
<svg class="a" style="left:13px;top:720px" width="16" height="16" viewBox="0 0 16 16"><path d="M8 0.8 L14.6 2.9 V10.9 L8 14.8 L1.4 10.9 V2.9Z" fill="#fff" stroke="#0a0a0a" stroke-width="1.2" stroke-linejoin="round"/><path d="M8 5 L14 3.3 V10.6 L8 14.2Z" fill="#767676"/><path d="M8 5 L2 3.3 V10.6 L8 14.2Z" fill="#dcdcdc"/><path d="M8 1.4 L14 3.3 L8 5 L2 3.3Z" fill="#fff"/></svg>
<svg class="a" style="left:30.4px;top:720px" width="8" height="16" viewBox="0 0 8 16"><path d="M4 1.5 L7 6.5 H1Z M4 14.5 L7 9.5 H1Z" fill="#b8b8b8"/></svg>
<div class="w" style="left:227px;top:718px;width:99px;height:20px;background:linear-gradient(#565656,#383838);border-radius:4px;"></div>
<svg class="a" style="left:231.5px;top:720px" width="16" height="16" viewBox="0 0 16 16"><path d="M8.5 0.8 L14.5 2.8 V10.5 L8.5 14 L2.5 10.5 V2.8Z" fill="#bdbdbd" stroke="#1a1a1a" stroke-width="1" stroke-linejoin="round"/><path d="M8.5 5 L14 3.2 V10.2 L8.5 13.4Z" fill="#8c8c8c"/><rect x="0.5" y="1.5" width="4" height="4" fill="#7a3400"/><rect x="1.3" y="2.3" width="2.4" height="2.4" fill="#ffe8b0"/><rect x="6.5" y="3.4000000000000004" width="4" height="4" fill="#7a3400"/><rect x="7.3" y="4.2" width="2.4" height="2.4" fill="#ffe8b0"/><rect x="0.5" y="9.3" width="4" height="4" fill="#7a3400"/><rect x="1.3" y="10.100000000000001" width="2.4" height="2.4" fill="#ffe8b0"/><rect x="6.5" y="11.4" width="4" height="4" fill="#7a3400"/><rect x="7.3" y="12.200000000000001" width="2.4" height="2.4" fill="#ffe8b0"/></svg>
<svg class="a" style="left:315.5px;top:720px" width="8" height="16" viewBox="0 0 8 16"><path d="M4 1.5 L7 6.5 H1Z M4 14.5 L7 9.5 H1Z" fill="#b8b8b8"/></svg>
<div class="w" style="left:331px;top:718px;width:32px;height:20px;background:linear-gradient(#565656,#383838);border-radius:4px;"></div>
<svg class="a" style="left:335px;top:720px" width="16" height="16" viewBox="0 0 16 16"><defs><radialGradient id="sg" cx="0.4" cy="0.35" r="0.75"><stop offset="0" stop-color="#fff"/><stop offset="0.6" stop-color="#f4f4f4"/><stop offset="1" stop-color="#b8b8b8"/></radialGradient></defs><circle cx="8" cy="8" r="6.5" fill="#0c0c0c"/><circle cx="8" cy="8" r="5.6" fill="url(#sg)"/></svg>
<svg class="a" style="left:352.4px;top:720px" width="8" height="16" viewBox="0 0 8 16"><path d="M4 1.5 L7 6.5 H1Z M4 14.5 L7 9.5 H1Z" fill="#b8b8b8"/></svg>
<div class="w" style="left:368px;top:718px;width:32px;height:20px;background:linear-gradient(#565656,#383838);border-radius:4px;"></div>
<svg class="a" style="left:372px;top:720.3px" width="16" height="16" viewBox="0 0 16 16"><circle cx="5" cy="4.5" r="4.2" fill="#7e7e7e"/><circle cx="10" cy="10.6" r="4.6" fill="#0c0c0c"/><circle cx="10" cy="10.6" r="3.8" fill="#f4f4f4"/><rect x="8.2" y="8.8" width="3.6" height="3.6" fill="#1446d8"/><rect x="9.3" y="9.9" width="1.4" height="1.4" fill="#fff"/></svg>
<svg class="a" style="left:389.6px;top:720px" width="8" height="16" viewBox="0 0 8 16"><path d="M4 1.5 L7 6.5 H1Z M4 14.5 L7 9.5 H1Z" fill="#b8b8b8"/></svg>
<div class="w" style="left:405px;top:718px;width:20px;height:20px;background:linear-gradient(#565656,#383838);border-radius:4px 0 0 4px;"></div>
<div class="w" style="left:424px;top:718px;width:21px;height:20px;background:linear-gradient(#4c70aa,#6390da);border-radius:0;"></div>
<div class="w" style="left:444px;top:718px;width:21px;height:20px;background:linear-gradient(#565656,#383838);border-radius:0;"></div>
<div class="w" style="left:464px;top:718px;width:21px;height:20px;background:linear-gradient(#565656,#383838);border-radius:0;"></div>
<div class="w" style="left:484px;top:718px;width:73px;height:20px;background:linear-gradient(#565656,#383838);border-radius:0 4px 4px 0;"></div>
<svg class="a" style="left:407px;top:720px" width="16" height="16" viewBox="0 0 16 16"><g stroke-linecap="round" fill="none"><path d="M8 9.5 V2" stroke="#14253f" stroke-width="3.2"/><path d="M8 9.5 L2 14" stroke="#3a1010" stroke-width="3.2"/><path d="M8 9.5 L14 14" stroke="#163a10" stroke-width="3.2"/><path d="M8 9.5 V2" stroke="#4a90f0" stroke-width="1.8"/><path d="M8 9.5 L2 14" stroke="#e8402a" stroke-width="1.8"/><path d="M8 9.5 L14 14" stroke="#6ccf20" stroke-width="1.8"/></g><circle cx="8" cy="2" r="0.9" fill="#fff"/><circle cx="2.2" cy="13.8" r="0.9" fill="#fff"/><circle cx="13.8" cy="13.8" r="0.9" fill="#fff"/><circle cx="8" cy="9.5" r="1" fill="#f0e8c8"/></svg>
<svg class="a" style="left:426.5px;top:720px" width="16" height="16" viewBox="0 0 16 16"><g stroke-linejoin="round" stroke-linecap="round"><path d="M2.8 13.4 L9.6 6.6" stroke="#10244a" stroke-width="3.6" fill="none"/><path d="M14.4 1.6 L6.2 4.2 L12 10Z" fill="#10244a" stroke="#10244a" stroke-width="1.6"/><path d="M2.8 13.4 L9.6 6.6" stroke="#9cc4ff" stroke-width="2" fill="none"/><path d="M2.6 13 L9 6.6" stroke="#fff" stroke-width="0.8" fill="none"/><path d="M14.2 1.8 L6.6 4.4 L11.8 9.6Z" fill="#a8ccff"/><path d="M13.6 2.4 L7.4 4.6 L9.4 6.6Z" fill="#dcecff"/></g></svg>
<svg class="a" style="left:446px;top:720px" width="16" height="16" viewBox="0 0 16 16"><path d="M3 14 Q3.5 4.5 14 3" fill="none" stroke="#22304a" stroke-width="3.4" stroke-linecap="round"/><path d="M3 14 Q3.5 4.5 14 3" fill="none" stroke="#6f8cba" stroke-width="1.8" stroke-linecap="round"/></svg>
<svg class="a" style="left:466px;top:720px" width="16" height="16" viewBox="0 0 16 16"><path d="M2.5 14 L10 6.5" fill="none" stroke="#22304a" stroke-width="3.2" stroke-linecap="round"/><path d="M2.5 14 L10 6.5" fill="none" stroke="#6f8cba" stroke-width="1.6" stroke-linecap="round"/><rect x="8.4" y="2.2" width="6.4" height="6.2" fill="#7c94bc" stroke="#22304a" stroke-width="1"/></svg>
<svg class="a" style="left:546.5px;top:720px" width="8" height="16" viewBox="0 0 8 16"><path d="M4 1.5 L7 6.5 H1Z M4 14.5 L7 9.5 H1Z" fill="#b8b8b8"/></svg>
<div class="w" style="left:562px;top:718px;width:20px;height:20px;background:linear-gradient(#a9a9a9,#8b8b8b);border-radius:4px 0 0 4px;"></div>
<div class="w" style="left:581px;top:718px;width:21px;height:20px;background:linear-gradient(#a9a9a9,#8b8b8b);border-radius:0;"></div>
<div class="w" style="left:601px;top:718px;width:21px;height:20px;background:linear-gradient(#585858,#6c6c6c);border-radius:0 4px 4px 0;"></div>
<svg class="a" style="left:563.7px;top:720.5px" width="16" height="16" viewBox="0 0 16 16"><path d="M9 1 L15 3.2 V11 L9 14.6 L3 11 V3.2Z" fill="#adadad" stroke="#8a8a8a" stroke-width="0.7"/><path d="M9 5.4 L15 3.2 V11 L9 14.6Z" fill="#9a9a9a"/><path d="M9 1 L15 3.2 L9 5.4 L3 3.2Z" fill="#bcbcbc"/><circle cx="3" cy="3.4" r="1.7" fill="#f2a890" stroke="#b07058" stroke-width="0.5"/></svg>
<svg class="a" style="left:582.8px;top:720.5px" width="16" height="16" viewBox="0 0 16 16"><path d="M9 1 L15 3.2 V11 L9 14.6 L3 11 V3.2Z" fill="#adadad" stroke="#8a8a8a" stroke-width="0.7"/><path d="M9 5.4 L15 3.2 V11 L9 14.6Z" fill="#9a9a9a"/><path d="M9 1 L15 3.2 L9 5.4 L3 3.2Z" fill="#bcbcbc"/><rect x="2" y="3.2" width="1.8" height="8.2" fill="#f2a890" stroke="#b07058" stroke-width="0.5"/></svg>
<svg class="a" style="left:602.8px;top:720.5px" width="16" height="16" viewBox="0 0 16 16"><path d="M9 1 L15 3.2 V11 L9 14.6 L3 11 V3.2Z" fill="#a0a0a0" stroke="#333" stroke-width="0.7"/><path d="M9 5.4 L15 3.2 V11 L9 14.6Z" fill="#8a8a8a"/><path d="M9 1 L15 3.2 L9 5.4 L3 3.2Z" fill="#b8b8b8"/><path d="M3 3.2 L9 5.4 V14.6 L3 11Z" fill="#ffad4a" stroke="#8a4a00" stroke-width="1" stroke-linejoin="round"/></svg>
<div class="w" style="left:627px;top:718px;width:20px;height:20px;background:linear-gradient(#585858,#6c6c6c);border-radius:4px;"></div>
<svg class="a" style="left:628.5px;top:720px" width="16" height="16" viewBox="0 0 16 16"><rect x="6.5" y="1.8" width="8" height="8" fill="#9c9c9c" stroke="#7c7c7c" stroke-width="0.8"/><circle cx="6.5" cy="1.8" r="1.5" fill="#d0d0d0" stroke="#666" stroke-width="0.9"/><circle cx="14.5" cy="1.8" r="1.5" fill="#d0d0d0" stroke="#666" stroke-width="0.9"/><circle cx="14.5" cy="9.8" r="1.5" fill="#d0d0d0" stroke="#666" stroke-width="0.9"/><rect x="2.5" y="6" width="8" height="8" fill="#c8c8c8" stroke="#1a1a1a" stroke-width="1"/><circle cx="2.5" cy="6" r="1.5" fill="#fff" stroke="#000" stroke-width="0.9"/><circle cx="10.5" cy="6" r="1.5" fill="#fff" stroke="#000" stroke-width="0.9"/><circle cx="2.5" cy="14" r="1.5" fill="#fff" stroke="#000" stroke-width="0.9"/><circle cx="10.5" cy="14" r="1.5" fill="#fff" stroke="#000" stroke-width="0.9"/></svg>
<div class="w" style="left:652px;top:718px;width:32px;height:20px;background:linear-gradient(#565656,#383838);border-radius:4px;"></div>
<svg class="a" style="left:656px;top:720px" width="16" height="16" viewBox="0 0 16 16"><circle cx="8" cy="8" r="5.6" fill="#7a7a7a" stroke="#3a3a3a" stroke-width="0.8"/><circle cx="8" cy="8" r="3.2" fill="#686868"/><circle cx="8" cy="8" r="1.6" fill="#7c7c7c"/></svg>
<svg class="a" style="left:673.5px;top:720px" width="8" height="16" viewBox="0 0 8 16"><path d="M4 1.5 L7 6.5 H1Z M4 14.5 L7 9.5 H1Z" fill="#b8b8b8"/></svg>
<div class="w" style="left:689px;top:718px;width:20px;height:20px;background:linear-gradient(#a9a9a9,#8b8b8b);border-radius:4px 0 0 4px;"></div>
<div class="w" style="left:708px;top:718px;width:33px;height:20px;background:linear-gradient(#565656,#383838);border-radius:0;"></div>
<div class="w" style="left:740px;top:718px;width:21px;height:20px;background:linear-gradient(#a9a9a9,#8b8b8b);border-radius:0 4px 4px 0;"></div>
<svg class="a" style="left:691px;top:720px" width="16" height="16" viewBox="0 0 16 16"><g transform="rotate(45 8 8)"><path d="M3.5 14 V7.5 A4.5 4.5 0 0 1 12.5 7.5 V14 H9.7 V7.5 A1.7 1.7 0 0 0 6.3 7.5 V14Z" fill="#8a8a8a" stroke="#5a5a5a" stroke-width="0.8"/><rect x="3.5" y="11.2" width="2.8" height="2.8" fill="#f0f0f0"/><rect x="9.7" y="11.2" width="2.8" height="2.8" fill="#f0f0f0"/></g></svg>
<svg class="a" style="left:712px;top:720px" width="16" height="16" viewBox="0 0 16 16"><g stroke="#d8d8d8" stroke-width="1" fill="none"><path d="M1.5 3.5 V12.5 M14.5 3.5 V12.5 M1.5 8 H14.5"/><path d="M4.5 6 V10 M11.5 6 V10" stroke-width="1.4"/></g><rect x="6.2" y="2.5" width="3.6" height="11" rx="1.2" fill="#1c4fc8"/><rect x="7.2" y="3.8" width="1.6" height="8.4" rx="0.8" fill="#fff"/></svg>
<svg class="a" style="left:730.5px;top:720px" width="8" height="16" viewBox="0 0 8 16"><path d="M4 1.5 L7 6.5 H1Z M4 14.5 L7 9.5 H1Z" fill="#b8b8b8"/></svg>
<svg class="a" style="left:743.5px;top:720px" width="16" height="16" viewBox="0 0 16 16"><g stroke="#fff" stroke-width="1.3" fill="none"><path d="M6 3 V15 M11 1 V15 M2 8 H15 M2 13 H15"/></g><circle cx="4.8" cy="4.6" r="4.1" fill="#16357a"/><circle cx="4.8" cy="4.6" r="3.3" fill="#f4f4ff"/><circle cx="4.8" cy="4.6" r="1.9" fill="#1c50d8"/><circle cx="4.8" cy="4.6" r="0.7" fill="#fff"/></svg>
<div class="w" style="left:766px;top:718px;width:20px;height:20px;background:linear-gradient(#a9a9a9,#8b8b8b);border-radius:4px;"></div>
<svg class="a" style="left:768px;top:720px" width="16" height="16" viewBox="0 0 16 16"><g stroke="#6a6a6a" stroke-width="1.6" stroke-linejoin="round" fill="#6a6a6a"><path d="M7.7 8.5 H3 L7.7 13.2Z M9 6.5 H13.7 L9 2.1Z"/><path d="M1.7 14.2 L5.4 10.8 M14.5 1.4 L11.3 4.3" stroke-width="3"/></g><path d="M7.7 8.5 H3 L7.7 13.2Z M9 6.5 H13.7 L9 2.1Z" fill="#fff"/><path d="M1.7 14.2 L5.4 10.8 M14.5 1.4 L11.3 4.3" stroke="#fff" stroke-width="1.6"/><circle cx="1.9" cy="14" r="1.7" fill="#f0a040" stroke="#8a4a08" stroke-width="0.7"/><circle cx="14.3" cy="1.6" r="1.7" fill="#f0a040" stroke="#8a4a08" stroke-width="0.7"/></svg>
<div class="w" style="left:791px;top:718px;width:20px;height:20px;background:linear-gradient(#a9a9a9,#8b8b8b);border-radius:4px;clip-path:inset(0 17px 0 0);"></div>
<svg class="a" style="left:0px;top:728px" width="13" height="13" viewBox="0 0 13 13"><path d="M0 2.5 L10.5 13 M0 6.5 L6.5 13" stroke="#222" stroke-width="1.3" fill="none"/><path d="M0 0.5 L12.5 13 M0 4.5 L8.5 13 M0 8.5 L4.5 13" stroke="#a0a0a0" stroke-width="1.2" fill="none"/></svg>
<div class="w" style="left:803px;top:719px;width:32px;height:20px;background:linear-gradient(#565656,#383838);border-radius:4px;"></div>
<svg class="a" style="left:807px;top:721.5px" width="16" height="16" viewBox="0 0 16 16"><rect x="0.5" y="0.5" width="15" height="14" rx="1.2" fill="#fff" stroke="#222" stroke-width="1"/><rect x="1" y="1" width="14" height="5.6" fill="#e9b4aa"/><rect x="9.5" y="2.4" width="2.6" height="2.6" fill="#fff"/><path d="M1 6.6 L3 5.6 L4 6.2 L6 5.8 L8 6.4 L11 5.6 L13 6.2 L15 5.8 V7.6 H1Z" fill="#111"/><rect x="1" y="7.6" width="14" height="2.6" fill="#8a7cc0"/><rect x="8.5" y="7.8" width="3" height="2" fill="#a8a0d0"/><rect x="1" y="10.2" width="14" height="0.8" fill="#222"/><circle cx="2.8" cy="12.8" r="0.9" fill="#e01010"/><rect x="5" y="12.4" width="9" height="0.8" fill="#a0a0a0"/></svg>
<svg class="a" style="left:824.5px;top:721px" width="8" height="16" viewBox="0 0 8 16"><path d="M4 1.5 L7 6.5 H1Z M4 14.5 L7 9.5 H1Z" fill="#b8b8b8"/></svg>
<div class="w" style="left:1027px;top:719px;width:32px;height:20px;background:linear-gradient(#565656,#383838);border-radius:4px 0 0 4px;"></div>
<svg class="a" style="left:1032px;top:721px" width="14" height="16" viewBox="0 0 14 16"><path d="M4 0.6 H12.6 V15.4 H1 V3.6Z" fill="#fff" stroke="#1a1a1a" stroke-width="0.9" stroke-linejoin="round"/><path d="M4.6 1.6 H11.6 V7.6 H2 V4.2Z" fill="#eab4aa"/><rect x="7.8" y="3" width="2.6" height="2.6" fill="#fff"/><path d="M2 7.8 L3.6 7 L5 7.6 L7 7.2 L9 7.8 L11.6 7.2 V9.4 H2Z" fill="#111"/><rect x="2" y="9.4" width="9.6" height="5" fill="#8a8cc8"/><rect x="7.6" y="9.8" width="3" height="3.6" fill="#a8b4d8"/><path d="M1 3.6 L4 3.6 L4 0.6Z" fill="#e8e8e8" stroke="#1a1a1a" stroke-width="0.6"/></svg>
<svg class="a" style="left:1048.5px;top:721px" width="8" height="16" viewBox="0 0 8 16"><path d="M4 1.5 L7 6.5 H1Z M4 14.5 L7 9.5 H1Z" fill="#b8b8b8"/></svg>
<div class="w" style="left:1058px;top:719px;width:61px;height:20px;background:linear-gradient(#a9a9a9,#8b8b8b);border-radius:0;"></div>
<div class="w" style="left:1118px;top:719px;width:61px;height:20px;background:linear-gradient(#a9a9a9,#8b8b8b);border-radius:0 4px 4px 0;"></div>
<svg class="a" style="left:1062px;top:721px" width="16" height="16" viewBox="0 0 16 16"><path d="M6.9 2.4 h2.2 v4.5 h4.5 v2.2 h-4.5 v4.5 h-2.2 v-4.5 h-4.5 v-2.2 h4.5z" fill="#fff" stroke="#2a2a2a" stroke-width="1.9" stroke-linejoin="round" paint-order="stroke"/></svg>
<svg class="a" style="left:1121px;top:721.5px" width="18" height="15" viewBox="0 0 18 15"><path d="M1 3.4 Q1 2.2 2.2 2.2 H6 L7.4 3.8 H9 V13.6 H1Z" fill="#b09a6a" stroke="#3a2a10" stroke-width="1"/><rect x="7.6" y="0.8" width="7" height="8" fill="#fff" stroke="#222" stroke-width="0.9"/><path d="M9 3 H13.2 M9 5 H13.2" stroke="#555" stroke-width="0.9"/><path d="M4.2 7 H16.6 V13.6 H1.6Z" fill="#ded09a" stroke="#3a2a10" stroke-width="1" stroke-linejoin="round"/></svg>
<div class="w" style="left:1184px;top:719px;width:20px;height:20px;background:linear-gradient(#a9a9a9,#8b8b8b);border-radius:4px;"></div>
<svg class="a" style="left:1184.3px;top:721px" width="18" height="18" viewBox="0 0 18 18"><g transform="rotate(45 9 9) translate(0 -0.8) scale(1.08) translate(-0.67 -0.3)"><path d="M6 1.5 H12 V3.2 H11 V7 L13.2 9.4 V10.6 H4.8 V9.4 L7 7 V3.2 H6Z" fill="#e8e8e8" stroke="#2a2a2a" stroke-width="1" stroke-linejoin="round"/><path d="M7.8 10.6 L9 18 L10.2 10.6Z" fill="#e8e8e8" stroke="#2a2a2a" stroke-width="1" stroke-linejoin="round"/><rect x="9.3" y="3.4" width="1.2" height="3.6" fill="#9a9a9a"/></g></svg>
<div class="w" style="left:1209px;top:719px;width:66px;height:20px;background:linear-gradient(#565656,#383838);border-radius:4px;"></div>
<svg class="a" style="left:1214px;top:721px" width="14" height="16" viewBox="0 0 14 16"><path d="M4 0.6 H12.6 V15.4 H1 V3.6Z" fill="#fff" stroke="#1a1a1a" stroke-width="0.9" stroke-linejoin="round"/><path d="M4.6 1.6 H11.6 V7.6 H2 V4.2Z" fill="#eab4aa"/><rect x="7.8" y="3" width="2.6" height="2.6" fill="#fff"/><path d="M2 7.8 L3.6 7 L5 7.6 L7 7.2 L9 7.8 L11.6 7.2 V9.4 H2Z" fill="#111"/><rect x="2" y="9.4" width="9.6" height="5" fill="#8a8cc8"/><rect x="7.6" y="9.8" width="3" height="3.6" fill="#a8b4d8"/><path d="M1 3.6 L4 3.6 L4 0.6Z" fill="#e8e8e8" stroke="#1a1a1a" stroke-width="0.6"/></svg>
<svg class="a" style="left:1264.7px;top:721px" width="8" height="16" viewBox="0 0 8 16"><path d="M4 1.5 L7 6.5 H1Z M4 14.5 L7 9.5 H1Z" fill="#b8b8b8"/></svg>
<div class="w" style="left:1280px;top:719px;width:32px;height:20px;background:linear-gradient(#565656,#383838);border-radius:4px;"></div>
<svg class="a" style="left:1284.5px;top:721px" width="16" height="16" viewBox="0 0 16 16"><g fill="none" stroke="#fff" stroke-width="1.3"><path d="M1 5 V1 H5 M11 1 H15 V5 M15 11 V15 H11 M5 15 H1 V11"/></g><circle cx="8" cy="8" r="4.2" fill="#8a8a8a"/><rect x="6" y="6" width="4" height="4" fill="#1e60e8"/><rect x="7.2" y="7.2" width="1.6" height="1.6" fill="#fff"/></svg>
<svg class="a" style="left:1301.5px;top:721px" width="8" height="16" viewBox="0 0 8 16"><path d="M4 1.5 L7 6.5 H1Z M4 14.5 L7 9.5 H1Z" fill="#b8b8b8"/></svg>
<div class="w" style="left:1317px;top:719px;width:22px;height:20px;background:linear-gradient(#a9a9a9,#8b8b8b);border-radius:4px;clip-path:inset(0 6px 0 0);"></div>
<div class="a" style="left:1318px;top:720px;width:15px;height:18px;overflow:hidden"><svg class="a" style="left:0.5px;top:1px" width="16" height="16" viewBox="0 0 16 16"><path d="M8.5 0.8 L14.5 2.8 V10.5 L8.5 14 L2.5 10.5 V2.8Z" fill="#d0d0d0" stroke="#555" stroke-width="0.8"/><rect x="0.8" y="1.8" width="3.6" height="3.6" fill="#8a3a00"/><rect x="1.7000000000000002" y="2.7" width="1.8" height="1.8" fill="#ffe4a8"/><rect x="0.8" y="8.799999999999999" width="3.6" height="3.6" fill="#8a3a00"/><rect x="1.7000000000000002" y="9.7" width="1.8" height="1.8" fill="#ffe4a8"/></svg></div>
<svg class="a" style="left:1325px;top:722px" width="9" height="14" viewBox="0 0 9 14"><path d="M1 0.8 V11.6 L3.6 9.2 L5.4 13.2 L7 12.4 L5.2 8.6 H8.6Z" fill="#fff" stroke="#111" stroke-width="0.9" stroke-linejoin="round"/></svg>
<svg class="a" style="left:796px;top:728px" width="13" height="13" viewBox="0 0 13 13"><path d="M0 2.5 L10.5 13 M0 6.5 L6.5 13" stroke="#222" stroke-width="1.3" fill="none"/><path d="M0 0.5 L12.5 13 M0 4.5 L8.5 13 M0 8.5 L4.5 13" stroke="#a0a0a0" stroke-width="1.2" fill="none"/></svg>
<div class="w" style="left:9px;top:745px;width:32px;height:20px;background:linear-gradient(#565656,#383838);border-radius:4px;"></div>
<svg class="a" style="left:13px;top:747px" width="16" height="16" viewBox="0 0 16 16"><circle cx="8" cy="8" r="6.8" fill="#222"/><circle cx="8" cy="8" r="5.9" fill="#f0f0f0"/><path d="M8 8 L3 13 A7 7 0 0 1 2.2 6Z" fill="#d8d8d8"/><path d="M7.6 8.6 L11.2 3.6" stroke="#222" stroke-width="1.1"/><path d="M7.8 8.2 L9.8 11.4" stroke="#e01010" stroke-width="1.4"/><g fill="#888"><circle cx="8" cy="3.2" r="0.5"/><circle cx="12.8" cy="8" r="0.5"/><circle cx="8" cy="12.8" r="0.5"/><circle cx="3.2" cy="8" r="0.5"/></g></svg>
<svg class="a" style="left:30.4px;top:747px" width="8" height="16" viewBox="0 0 8 16"><path d="M4 1.5 L7 6.5 H1Z M4 14.5 L7 9.5 H1Z" fill="#b8b8b8"/></svg>
<div class="w" style="left:263px;top:745px;width:20px;height:20px;background:linear-gradient(#a9a9a9,#8b8b8b);border-radius:4px 0 0 4px;"></div>
<div class="w" style="left:282px;top:745px;width:21px;height:20px;background:linear-gradient(#a9a9a9,#8b8b8b);border-radius:0 4px 4px 0;"></div>
<svg class="a" style="left:265px;top:747px" width="16" height="16" viewBox="0 0 16 16"><circle cx="8" cy="8" r="6.8" fill="#111"/><circle cx="8" cy="8" r="5.9" fill="#f4f4f4"/><path d="M8 8 V2.1 A5.9 5.9 0 0 1 13.9 8Z" fill="#ffa000"/><path d="M7.4 7.6 H13.6" stroke="#222" stroke-width="1.1"/><path d="M7.6 8.4 L9.8 10.8" stroke="#e01010" stroke-width="1.5"/><circle cx="3.4" cy="8.4" r="0.5" fill="#aaa"/><circle cx="8.2" cy="12.6" r="0.5" fill="#aaa"/></svg>
<svg class="a" style="left:286.5px;top:747px" width="14" height="16" viewBox="0 0 14 16"><path d="M3.4 8 V5 A3.6 3.6 0 0 1 10.6 5 V8" fill="none" stroke="#2a2a2a" stroke-width="3"/><path d="M3.4 8 V5 A3.6 3.6 0 0 1 10.6 5 V8" fill="none" stroke="#f0f0f0" stroke-width="1.3"/><rect x="1.3" y="7.4" width="11.4" height="7.6" rx="0.8" fill="#f4f4f4" stroke="#2a2a2a" stroke-width="1"/><path d="M2.4 9.6 H11.6 M2.4 12 H11.6" stroke="#c8c8d8" stroke-width="0.8"/><ellipse cx="7" cy="11" rx="0.8" ry="1.3" fill="#222"/></svg>
<div class="w" style="left:308px;top:745px;width:117px;height:20px;background:linear-gradient(#a0a0a0,#b6b6b6);border-radius:10px 0 0 10px;"></div>
<div class="w" style="left:424px;top:745px;width:112px;height:20px;background:linear-gradient(#a0a0a0,#b6b6b6);border-radius:0 10px 10px 0;"></div>
<svg class="a" style="left:313px;top:751px" width="6" height="8"><path d="M0.5 4 L5 0.8 V7.2Z" fill="#6a6a6a"/></svg>
<svg class="a" style="left:414px;top:751px" width="6" height="8"><path d="M5.5 4 L1 0.8 V7.2Z" fill="#6a6a6a"/></svg>
<svg class="a" style="left:429.5px;top:751px" width="6" height="8"><path d="M0.5 4 L5 0.8 V7.2Z" fill="#6a6a6a"/></svg>
<svg class="a" style="left:524.5px;top:751px" width="6" height="8"><path d="M5.5 4 L1 0.8 V7.2Z" fill="#6a6a6a"/></svg>
<div class="w" style="left:541px;top:745px;width:90px;height:20px;background:linear-gradient(#a0a0a0,#b6b6b6);border-radius:10px;"></div>
<svg class="a" style="left:546px;top:751px" width="6" height="8"><path d="M0.5 4 L5 0.8 V7.2Z" fill="#6a6a6a"/></svg>
<svg class="a" style="left:619.8px;top:751px" width="6" height="8"><path d="M5.5 4 L1 0.8 V7.2Z" fill="#6a6a6a"/></svg>
<div class="w" style="left:647px;top:745px;width:20px;height:20px;background:linear-gradient(#a9a9a9,#8b8b8b);border-radius:4px 0 0 4px;"></div>
<div class="w" style="left:666px;top:745px;width:21px;height:20px;background:linear-gradient(#a9a9a9,#8b8b8b);border-radius:0;"></div>
<div class="w" style="left:686px;top:745px;width:21px;height:20px;background:linear-gradient(#a9a9a9,#8b8b8b);border-radius:0;"></div>
<div class="w" style="left:706px;top:745px;width:21px;height:20px;background:linear-gradient(#a9a9a9,#8b8b8b);border-radius:0;"></div>
<div class="w" style="left:726px;top:745px;width:21px;height:20px;background:linear-gradient(#a9a9a9,#8b8b8b);border-radius:0;"></div>
<div class="w" style="left:746px;top:745px;width:21px;height:20px;background:linear-gradient(#a9a9a9,#8b8b8b);border-radius:0 4px 4px 0;"></div>
<svg class="a" style="left:644px;top:745px" width="126" height="20" viewBox="0 0 126 20"><rect x="6" y="5.3" width="1.6" height="9" fill="#f4f4f4" stroke="#2a2a2a" stroke-width="0.8"/><path d="M8 9.8 L12.6 5.500000000000001 L12.6 14.100000000000001Z" fill="#f4f4f4" stroke="#2a2a2a" stroke-width="0.9" stroke-linejoin="round"/><path d="M13.3 9.8 L19.5 5.500000000000001 L19.5 14.100000000000001Z" fill="#f4f4f4" stroke="#2a2a2a" stroke-width="0.9" stroke-linejoin="round"/><path d="M25.7 9.8 L31.4 5.500000000000001 L31.4 14.100000000000001Z" fill="#f4f4f4" stroke="#2a2a2a" stroke-width="0.9" stroke-linejoin="round"/><path d="M31.9 9.8 L37.6 5.500000000000001 L37.6 14.100000000000001Z" fill="#f4f4f4" stroke="#2a2a2a" stroke-width="0.9" stroke-linejoin="round"/><path d="M46.6 9.8 L57.6 3.4000000000000004 L57.6 16.200000000000003Z" fill="#f4f4f4" stroke="#2a2a2a" stroke-width="1.1" stroke-linejoin="round"/><path d="M78 9.8 L66.6 3.4000000000000004 L66.6 16.200000000000003Z" fill="#f4f4f4" stroke="#2a2a2a" stroke-width="1.1" stroke-linejoin="round"/><path d="M92.8 9.8 L86.6 5.500000000000001 L86.6 14.100000000000001Z" fill="#f4f4f4" stroke="#2a2a2a" stroke-width="0.9" stroke-linejoin="round"/><path d="M98.5 9.8 L92.8 5.500000000000001 L92.8 14.100000000000001Z" fill="#f4f4f4" stroke="#2a2a2a" stroke-width="0.9" stroke-linejoin="round"/><path d="M111.8 9.8 L105.6 5.500000000000001 L105.6 14.100000000000001Z" fill="#f4f4f4" stroke="#2a2a2a" stroke-width="0.9" stroke-linejoin="round"/><path d="M117.5 9.8 L111.8 5.500000000000001 L111.8 14.100000000000001Z" fill="#f4f4f4" stroke="#2a2a2a" stroke-width="0.9" stroke-linejoin="round"/><rect x="118" y="5.3" width="1.6" height="9" fill="#f4f4f4" stroke="#2a2a2a" stroke-width="0.8"/></svg>
<div class="w" style="left:772px;top:745px;width:115px;height:20px;background:linear-gradient(#565656,#383838);border-radius:4px;"></div>
<svg class="a" style="left:876.8px;top:747px" width="8" height="16" viewBox="0 0 8 16"><path d="M4 1.5 L7 6.5 H1Z M4 14.5 L7 9.5 H1Z" fill="#b8b8b8"/></svg>
<div class="w" style="left:903px;top:745px;width:20px;height:20px;background:linear-gradient(#a9a9a9,#8b8b8b);border-radius:4px;"></div>
<svg class="a" style="left:905px;top:747px" width="16" height="16" viewBox="0 0 16 16"><circle cx="8" cy="8" r="5.2" fill="#7a3010"/><circle cx="8" cy="8" r="4.4" fill="#f08a60"/><circle cx="8" cy="8" r="3.5" fill="#e03a1a"/></svg>
<div class="w" style="left:928px;top:745px;width:32px;height:20px;background:linear-gradient(#565656,#383838);border-radius:4px;"></div>
<svg class="a" style="left:932px;top:747px" width="16" height="16" viewBox="0 0 16 16"><path d="M8 2.6 L13.4 8 L8 13.4 L2.6 8Z" fill="#ffbd38" stroke="#0c0c0c" stroke-width="1.3" stroke-linejoin="round"/></svg>
<svg class="a" style="left:949.8px;top:747px" width="8" height="16" viewBox="0 0 8 16"><path d="M4 1.5 L7 6.5 H1Z M4 14.5 L7 9.5 H1Z" fill="#b8b8b8"/></svg>
<div class="w" style="left:965px;top:745px;width:131px;height:20px;background:linear-gradient(#a0a0a0,#b6b6b6);border-radius:4px 0 0 4px;"></div>
<div class="w" style="left:1095px;top:745px;width:21px;height:20px;background:linear-gradient(#a9a9a9,#8b8b8b);border-radius:0;"></div>
<div class="w" style="left:1115px;top:745px;width:21px;height:20px;background:linear-gradient(#a9a9a9,#8b8b8b);border-radius:0 4px 4px 0;"></div>
<svg class="a" style="left:965px;top:745px" width="172" height="20" viewBox="0 0 172 20"><g fill="none" stroke-linecap="round"><path d="M11 14.5 L18.8 7 M17.9 7.8 l1.7 1.7 M16.3 9.4 l1.4 1.4" stroke="#3a3a3a" stroke-width="2.8"/><circle cx="11" cy="14.5" r="2.4" stroke="#3a3a3a" stroke-width="3"/><path d="M11 14.5 L18.8 7 M17.9 7.8 l1.7 1.7 M16.3 9.4 l1.4 1.4" stroke="#f4f4f4" stroke-width="1.4"/><circle cx="11" cy="14.5" r="2.4" stroke="#f4f4f4" stroke-width="1.6" fill="#777"/></g><g fill="none" stroke-linecap="round"><path d="M7.7 13.4 L8.2 3 M8.1 4.2 l2.4 0.1 M8.0 6.4 l2.0 0.1" stroke="#3a3a3a" stroke-width="2.8"/><circle cx="7.7" cy="13.4" r="2.4" stroke="#3a3a3a" stroke-width="3"/><path d="M7.7 13.4 L8.2 3 M8.1 4.2 l2.4 0.1 M8.0 6.4 l2.0 0.1" stroke="#f0dc8a" stroke-width="1.4"/><circle cx="7.7" cy="13.4" r="2.4" stroke="#f0dc8a" stroke-width="1.6" fill="#777"/></g><g fill="none" stroke-linecap="round"><path d="M136.5 13.4 L145.2 5.5 M144.3 6.3 l1.6 1.8 M142.7 7.8 l1.3 1.5" stroke="#3a3a3a" stroke-width="2.8"/><circle cx="136.5" cy="13.4" r="2.4" stroke="#3a3a3a" stroke-width="3"/><path d="M136.5 13.4 L145.2 5.5 M144.3 6.3 l1.6 1.8 M142.7 7.8 l1.3 1.5" stroke="#f4f4f4" stroke-width="1.4"/><circle cx="136.5" cy="13.4" r="2.4" stroke="#f4f4f4" stroke-width="1.6" fill="#777"/></g><g fill="none" stroke-linecap="round"><path d="M156.5 13.4 L165.2 5.7 M164.3 6.5 l1.6 1.8 M162.7 8.0 l1.3 1.5" stroke="#3a3a3a" stroke-width="2.8"/><circle cx="156.5" cy="13.4" r="2.4" stroke="#3a3a3a" stroke-width="3"/><path d="M156.5 13.4 L165.2 5.7 M164.3 6.5 l1.6 1.8 M162.7 8.0 l1.3 1.5" stroke="#f4f4f4" stroke-width="1.4"/><circle cx="156.5" cy="13.4" r="2.4" stroke="#f4f4f4" stroke-width="1.6" fill="#777"/></g><path d="M154.2 4.2 L166 15.7" stroke="#f04040" stroke-width="1.5"/></svg>
<svg class="a" style="left:0px;top:753px" width="13" height="13" viewBox="0 0 13 13"><path d="M0 2.5 L10.5 13 M0 6.5 L6.5 13" stroke="#222" stroke-width="1.3" fill="none"/><path d="M0 0.5 L12.5 13 M0 4.5 L8.5 13 M0 8.5 L4.5 13" stroke="#a0a0a0" stroke-width="1.2" fill="none"/></svg>
<svg class="a" style="left:1320px;top:743px" width="13" height="13" viewBox="0 0 13 13"><path d="M2.5 0 L13 10.5 M6.5 0 L13 6.5" stroke="#222" stroke-width="1.3" fill="none"/><path d="M0.5 0 L13 12.5 M4.5 0 L13 8.5 M8.5 0 L13 4.5" stroke="#a0a0a0" stroke-width="1.2" fill="none"/></svg>
<div class="a" style="left:1334px;top:75px;width:32px;height:1px;background:#585858"></div>
<div class="a" style="left:1334px;top:169px;width:32px;height:1px;background:#000"></div>
<div class="a" style="left:1334px;top:195px;width:32px;height:1px;background:#585858"></div>
<div class="w" style="left:1343px;top:53px;width:32px;height:20px;background:linear-gradient(#565656,#383838);border-radius:4px;"></div>
<svg class="a" style="left:1347px;top:55px" width="16" height="16" viewBox="0 0 16 16"><rect x="0.6" y="0.5" width="7.4" height="3.2" rx="0.8" fill="#ff9a20" stroke="#6a3000" stroke-width="0.8"/><rect x="1.8" y="1.3" width="5" height="1.4" fill="#ffe8c0"/><path d="M3.4 4 V13.6 M3.4 8 H7.6 M3.4 13.6 H7.6" stroke="#8aa0d0" stroke-width="1" fill="none"/><rect x="7.8" y="6.8" width="6.4" height="2.6" fill="#fff" stroke="#333" stroke-width="0.5"/><rect x="7.8" y="12.6" width="6.4" height="2.6" fill="#fff" stroke="#333" stroke-width="0.5"/></svg>
<div class="w" style="left:1343px;top:173px;width:32px;height:20px;background:linear-gradient(#565656,#383838);border-radius:4px;"></div>
<svg class="a" style="left:1347px;top:176.5px" width="16" height="14" viewBox="0 0 16 14"><rect x="1" y="1.2" width="12.6" height="3.6" rx="1.2" fill="#6a6a6a" stroke="#2a2a2a" stroke-width="0.8"/><rect x="9" y="0.8" width="4.8" height="4.4" rx="1" fill="#eee"/><rect x="1" y="7.6" width="12.8" height="5" rx="1.4" fill="#fff" stroke="#1a1a1a" stroke-width="0.9"/><rect x="4" y="8.6" width="6.8" height="3" fill="#c8c8c8"/><path d="M2 10.1 L3.6 8.8 V11.4Z M12.8 10.1 L11.2 8.8 V11.4Z" fill="#222"/></svg>
<div class="a" style="left:1349px;top:81px;width:13px;height:66px;border-radius:6.5px;background:#585858"></div>
<div class="a" style="left:1349px;top:80px;width:13px;height:62px;border-radius:6.5px;border:1px solid #444;background:linear-gradient(90deg,#9c9c9c,#7e7e7e)"></div>
<svg class="a" style="left:1335px;top:141.5px" width="12" height="11" viewBox="0 0 12 11"><rect x="0.5" y="2.2" width="11" height="8.3" rx="0.8" fill="#e8e8e8" stroke="#1a1a1a" stroke-width="1"/><rect x="1" y="0.6" width="3.4" height="2" fill="#eee" stroke="#222" stroke-width="0.6"/><circle cx="6" cy="6.6" r="3.1" fill="#30343c"/><circle cx="6" cy="6.6" r="1.7" fill="#5a70a8"/><circle cx="2.4" cy="4" r="0.9" fill="#e01010"/><circle cx="7" cy="7.6" r="0.9" fill="#c04040"/></svg>
<div class="a" style="left:1334px;top:151px;width:11px;height:14px;border-radius:0 7px 7px 0;background:#7c7c7c"></div>
<div class="a" style="left:1362px;top:151px;width:4px;height:1px;background:#333"></div>
<div class="a" style="left:1349px;top:197px;width:13px;height:567px;border-radius:6.5px;background:#5a5a5a"></div>
<div class="a" style="left:1349px;top:200px;width:13px;height:281px;border-radius:6.5px;border:1px solid #444;background:linear-gradient(90deg,#9c9c9c,#7e7e7e)"></div>
<div class="a" style="left:1342px;top:376px;width:8px;height:19px;border-radius:3px 0 0 3px;background:#3c3c3c"></div><div class="a" style="left:1347px;top:381px;width:2px;height:8px;background:#ddd"></div>
<div class="a" style="left:1339px;top:428px;width:5px;height:1px;background:#2e2e2e"></div>
<svg class="a" style="left:1335px;top:439px" width="5" height="5"><path d="M0 0h1v1h-1z M3 0h1v1h-1z M0 3h1v1h-1z M3 3h1v1h-1z" fill="#ccc"/></svg>
<svg class="a" style="left:1346px;top:437px" width="4" height="4"><path d="M0 0 H4 L3 4Z" fill="#2e2e2e"/></svg>
<div class="a" style="left:1339px;top:588px;width:5px;height:1px;background:#2e2e2e"></div>
<svg class="a" style="left:1335px;top:599px" width="5" height="5"><path d="M0 0h1v1h-1z M3 0h1v1h-1z M0 3h1v1h-1z M3 3h1v1h-1z" fill="#ccc"/></svg>
<svg class="a" style="left:1346px;top:597px" width="4" height="4"><path d="M0 0 H4 L3 4Z" fill="#2e2e2e"/></svg>
<div class="a" style="left:1339px;top:676px;width:5px;height:1px;background:#2e2e2e"></div>
<svg class="a" style="left:1335px;top:687px" width="5" height="5"><path d="M0 0h1v1h-1z M3 0h1v1h-1z M0 3h1v1h-1z M3 3h1v1h-1z" fill="#ccc"/></svg>
<svg class="a" style="left:1346px;top:685px" width="4" height="4"><path d="M0 0 H4 L3 4Z" fill="#2e2e2e"/></svg>
<svg class="a" style="left:1353px;top:51px" width="13" height="13" viewBox="0 0 13 13"><path d="M2.5 0 L13 10.5 M6.5 0 L13 6.5" stroke="#222" stroke-width="1.3" fill="none"/><path d="M0.5 0 L13 12.5 M4.5 0 L13 8.5 M8.5 0 L13 4.5" stroke="#a0a0a0" stroke-width="1.2" fill="none"/></svg>
<svg class="a" style="left:1335px;top:156px" width="13" height="13" viewBox="0 0 13 13"><path d="M0 2.5 L10.5 13 M0 6.5 L6.5 13" stroke="#222" stroke-width="1.3" fill="none"/><path d="M0 0.5 L12.5 13 M0 4.5 L8.5 13 M0 8.5 L4.5 13" stroke="#a0a0a0" stroke-width="1.2" fill="none"/></svg>
<svg class="a" style="left:1353px;top:171px" width="13" height="13" viewBox="0 0 13 13"><path d="M2.5 0 L13 10.5 M6.5 0 L13 6.5" stroke="#222" stroke-width="1.3" fill="none"/><path d="M0.5 0 L13 12.5 M4.5 0 L13 8.5 M8.5 0 L13 4.5" stroke="#a0a0a0" stroke-width="1.2" fill="none"/></svg>
<svg class="a" style="left:1335px;top:755px" width="13" height="13" viewBox="0 0 13 13"><path d="M0 2.5 L10.5 13 M0 6.5 L6.5 13" stroke="#222" stroke-width="1.3" fill="none"/><path d="M0 0.5 L12.5 13 M0 4.5 L8.5 13 M0 8.5 L4.5 13" stroke="#a0a0a0" stroke-width="1.2" fill="none"/></svg>
<div id="tx"><span class="t" style="left:52.0px;top:32px;color:#000;letter-spacing:0.55px">File</span>
<span class="t" style="left:90.1px;top:32px;color:#000;letter-spacing:0.04px">Render</span>
<span class="t" style="left:144.9px;top:32px;color:#000;letter-spacing:0.17px">Window</span>
<span class="t" style="left:205.0px;top:32px;color:#000;letter-spacing:0.21px">Help</span>
<span class="t" style="left:280.1px;top:32px;color:#000;letter-spacing:-0.01px">Default</span>
<span class="t" style="left:476.9px;top:32px;color:#000;letter-spacing:0.12px">Scene</span>
<span class="t s" style="left:653.9px;top:32px;color:#fff;letter-spacing:0.03px">Blender Render</span>
<span class="t" style="left:800.9px;top:32px;color:#000;letter-spacing:0.25px">v2.79.7</span>
<span class="t" style="left:849.8px;top:32px;color:#000;letter-spacing:0.33px">Verts:234/234</span>
<span class="t" style="left:933.1px;top:32px;color:#000;letter-spacing:0.17px">Edges:319/319</span>
<span class="t" style="left:1019.2px;top:32px;color:#000;letter-spacing:0.28px">Faces:121/121</span>
<span class="t" style="left:1105.0px;top:32px;color:#000;letter-spacing:0.26px">Tris:396</span>
<span class="t" style="left:1154.9px;top:32px;color:#000;letter-spacing:0.25px">Mem: 11.9 MB</span>
<span class="t" style="left:1237.8px;top:32px;color:#000;letter-spacing:0.04px">Code</span>
<span class="t" style="left:843.8px;top:32px;color:#000;letter-spacing:0.00px">|</span>
<span class="t" style="left:927.0px;top:32px;color:#000;letter-spacing:0.00px">|</span>
<span class="t" style="left:1012.8px;top:32px;color:#000;letter-spacing:0.00px">|</span>
<span class="t" style="left:1099.1px;top:32px;color:#000;letter-spacing:0.00px">|</span>
<span class="t" style="left:1149.0px;top:32px;color:#000;letter-spacing:0.00px">|</span>
<span class="t" style="left:1232.0px;top:32px;color:#000;letter-spacing:0.00px">|</span>
<span class="t" style="left:19.9px;top:61px;color:#fff;letter-spacing:0.02px">User Persp</span>
<span class="t" style="left:70.0px;top:695px;color:#fff;letter-spacing:0.23px">(215) Code</span>
<span class="t" style="left:28.4px;top:654.5px;color:#0000f0;letter-spacing:-0.20px">z</span>
<span class="t" style="left:52.9px;top:676px;color:#00c800;letter-spacing:0.64px">y</span>
<span class="t" style="left:31.4px;top:690px;color:#dc0000;letter-spacing:0.14px">x</span>
<span class="t" style="left:52.9px;top:723px;color:#000;letter-spacing:0.41px">View</span>
<span class="t" style="left:98.0px;top:723px;color:#000;letter-spacing:0.11px">Select</span>
<span class="t" style="left:148.9px;top:723px;color:#000;letter-spacing:0.21px">Add</span>
<span class="t" style="left:188.1px;top:723px;color:#000;letter-spacing:0.11px">Mesh</span>
<span class="t s" style="left:250.8px;top:723px;color:#fff;letter-spacing:0.04px">Edit Mode</span>
<span class="t s" style="left:492.0px;top:723px;color:#fff;letter-spacing:0.00px">Global</span>
<span class="t" style="left:847.0px;top:724px;color:#000;letter-spacing:0.33px">View</span>
<span class="t" style="left:892.2px;top:724px;color:#000;letter-spacing:0.11px">Select</span>
<span class="t" style="left:943.2px;top:724px;color:#000;letter-spacing:0.08px">Image</span>
<span class="t" style="left:994.1px;top:724px;color:#000;letter-spacing:0.51px">UVs</span>
<span class="t" style="left:1085.3px;top:724px;color:#000;letter-spacing:0.27px">New</span>
<span class="t" style="left:1143.3px;top:724px;color:#000;letter-spacing:0.02px">Open</span>
<span class="t s" style="left:1232.4px;top:724px;color:#fff;letter-spacing:0.38px">View</span>
<span class="t" style="left:52.7px;top:750px;color:#000;letter-spacing:0.43px">View</span>
<span class="t" style="left:97.8px;top:750px;color:#000;letter-spacing:0.29px">Marker</span>
<span class="t" style="left:152.8px;top:750px;color:#000;letter-spacing:0.39px">Frame</span>
<span class="t" style="left:205.0px;top:750px;color:#000;letter-spacing:0.17px">Playback</span>
<span class="t" style="left:323.7px;top:750px;color:#000;letter-spacing:0.06px">Start:</span>
<span class="t" style="left:401.9px;top:750px;color:#000;letter-spacing:0.20px">1</span>
<span class="t" style="left:439.8px;top:750px;color:#000;letter-spacing:-0.04px">End:</span>
<span class="t" style="left:498.7px;top:750px;color:#000;letter-spacing:0.80px">250</span>
<span class="t" style="left:574.8px;top:750px;color:#000;letter-spacing:0.64px">215</span>
<span class="t s" style="left:779.8px;top:750px;color:#fff;letter-spacing:0.08px">No Sync</span></div>
</div></body></html>
